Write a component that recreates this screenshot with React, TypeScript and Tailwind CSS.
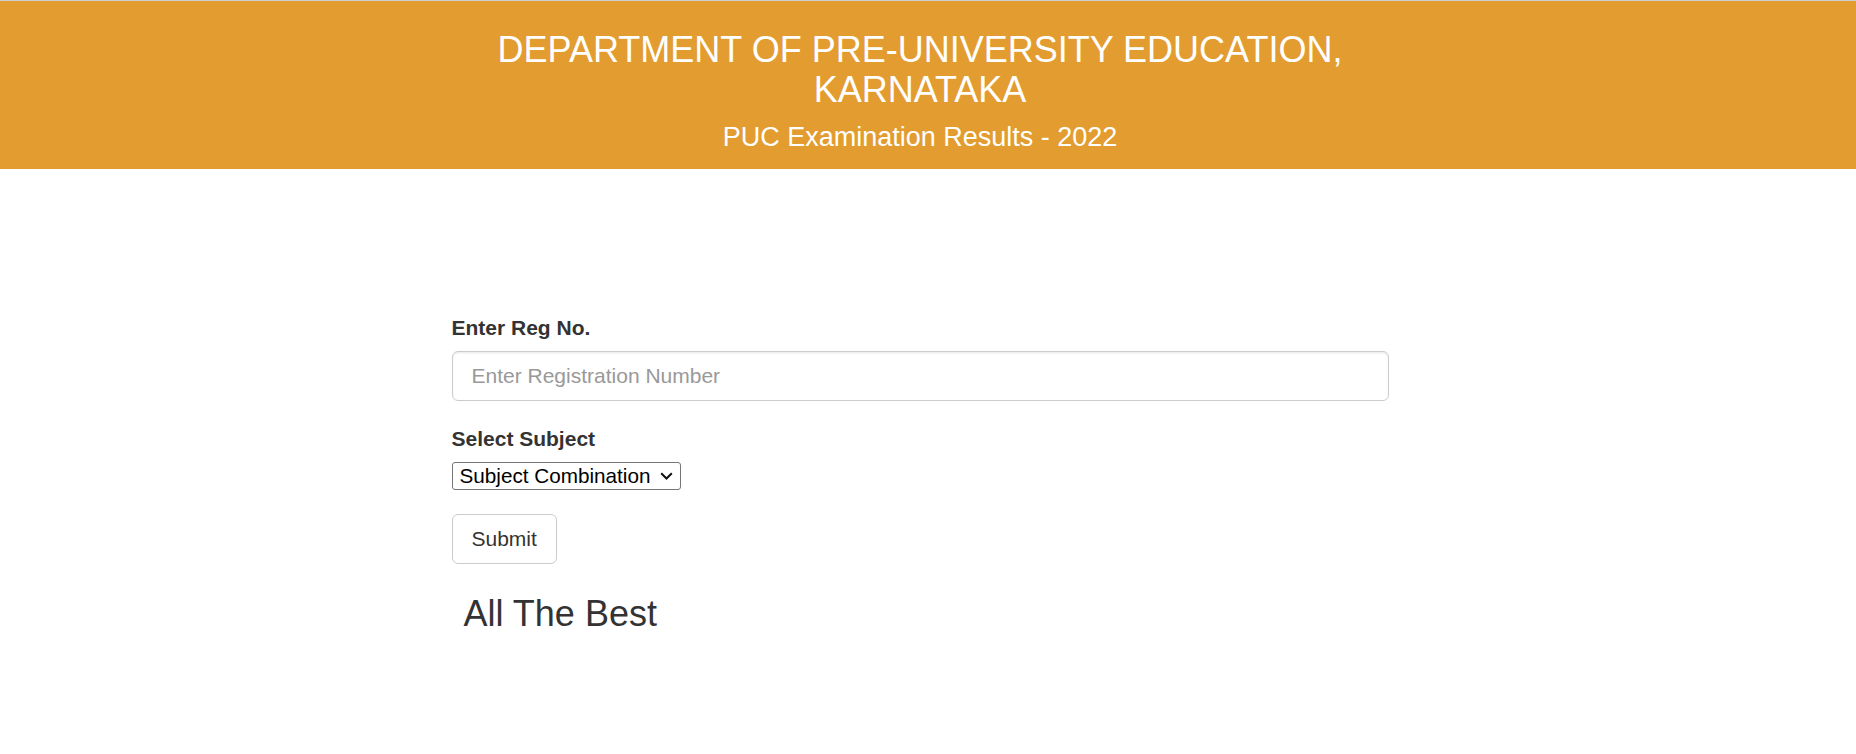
import React from "react";

export default function App() {
  return (
    <div className="min-h-[754px] bg-white font-['Liberation_Sans',Arial,sans-serif] text-[#333]">
      <header className="box-border h-[169px] border-t border-[#cfcfcf] bg-[#e39c2f] pt-[29px] text-white">
        <div className="pr-[16px]">
          <h1 className="mx-auto w-[900px] text-center text-[36px] font-normal leading-[40px]">
            DEPARTMENT OF PRE-UNIVERSITY EDUCATION, KARNATAKA
          </h1>
          <h2 className="mt-[12px] text-center text-[27px] font-normal leading-[30px]">
            PUC Examination Results - 2022
          </h2>
        </div>
      </header>

      <main className="pr-[16px]">
        <form
          className="mx-auto w-[937px] pt-[144px]"
          onSubmit={(e) => e.preventDefault()}
        >
          <label className="block text-[21px] font-bold leading-[30px] text-[#333]">
            Enter Reg No.
          </label>
          <input
            type="text"
            placeholder="Enter Registration Number"
            className="mt-[8px] box-border block h-[50px] w-full rounded-[6px] border border-[#cccccc] bg-white px-[19px] text-[21px] text-[#555] shadow-[inset_0_1.5px_1.5px_rgba(0,0,0,0.075)] outline-none placeholder:text-[#999]"
          />

          <label className="mt-[23px] block text-[21px] font-bold leading-[30px] text-[#333]">
            Select Subject
          </label>
          <div className="relative mt-[8px] h-[28px] w-[229px]">
            <select
              defaultValue=""
              className="box-border block h-[28px] w-[229px] appearance-none rounded-[3px] border border-[#767676] bg-white pl-[7px] pr-[30px] text-[20.7px] leading-[24px] text-black"
            >
              <option value="">Subject Combination</option>
              <option value="pcmb">PCMB</option>
              <option value="pcmc">PCMC</option>
            </select>
            <svg
              className="pointer-events-none absolute left-[208px] top-[10px] h-[8px] w-[13px]"
              viewBox="0 0 13 8"
              fill="none"
            >
              <path d="M1.2 1.2 L6.5 6.5 L11.8 1.2" stroke="#111" strokeWidth="2" />
            </svg>
          </div>

          <button
            type="submit"
            className="mt-[24px] box-border block h-[50px] rounded-[6px] border border-[#cccccc] bg-white px-[19px] text-[21px] leading-[30px] text-[#333]"
          >
            Submit
          </button>

          <h3 className="ml-[12px] mt-[30px] text-[36px] font-normal leading-[40px] text-[#333]">
            All The Best
          </h3>
        </form>
      </main>
    </div>
  );
}
